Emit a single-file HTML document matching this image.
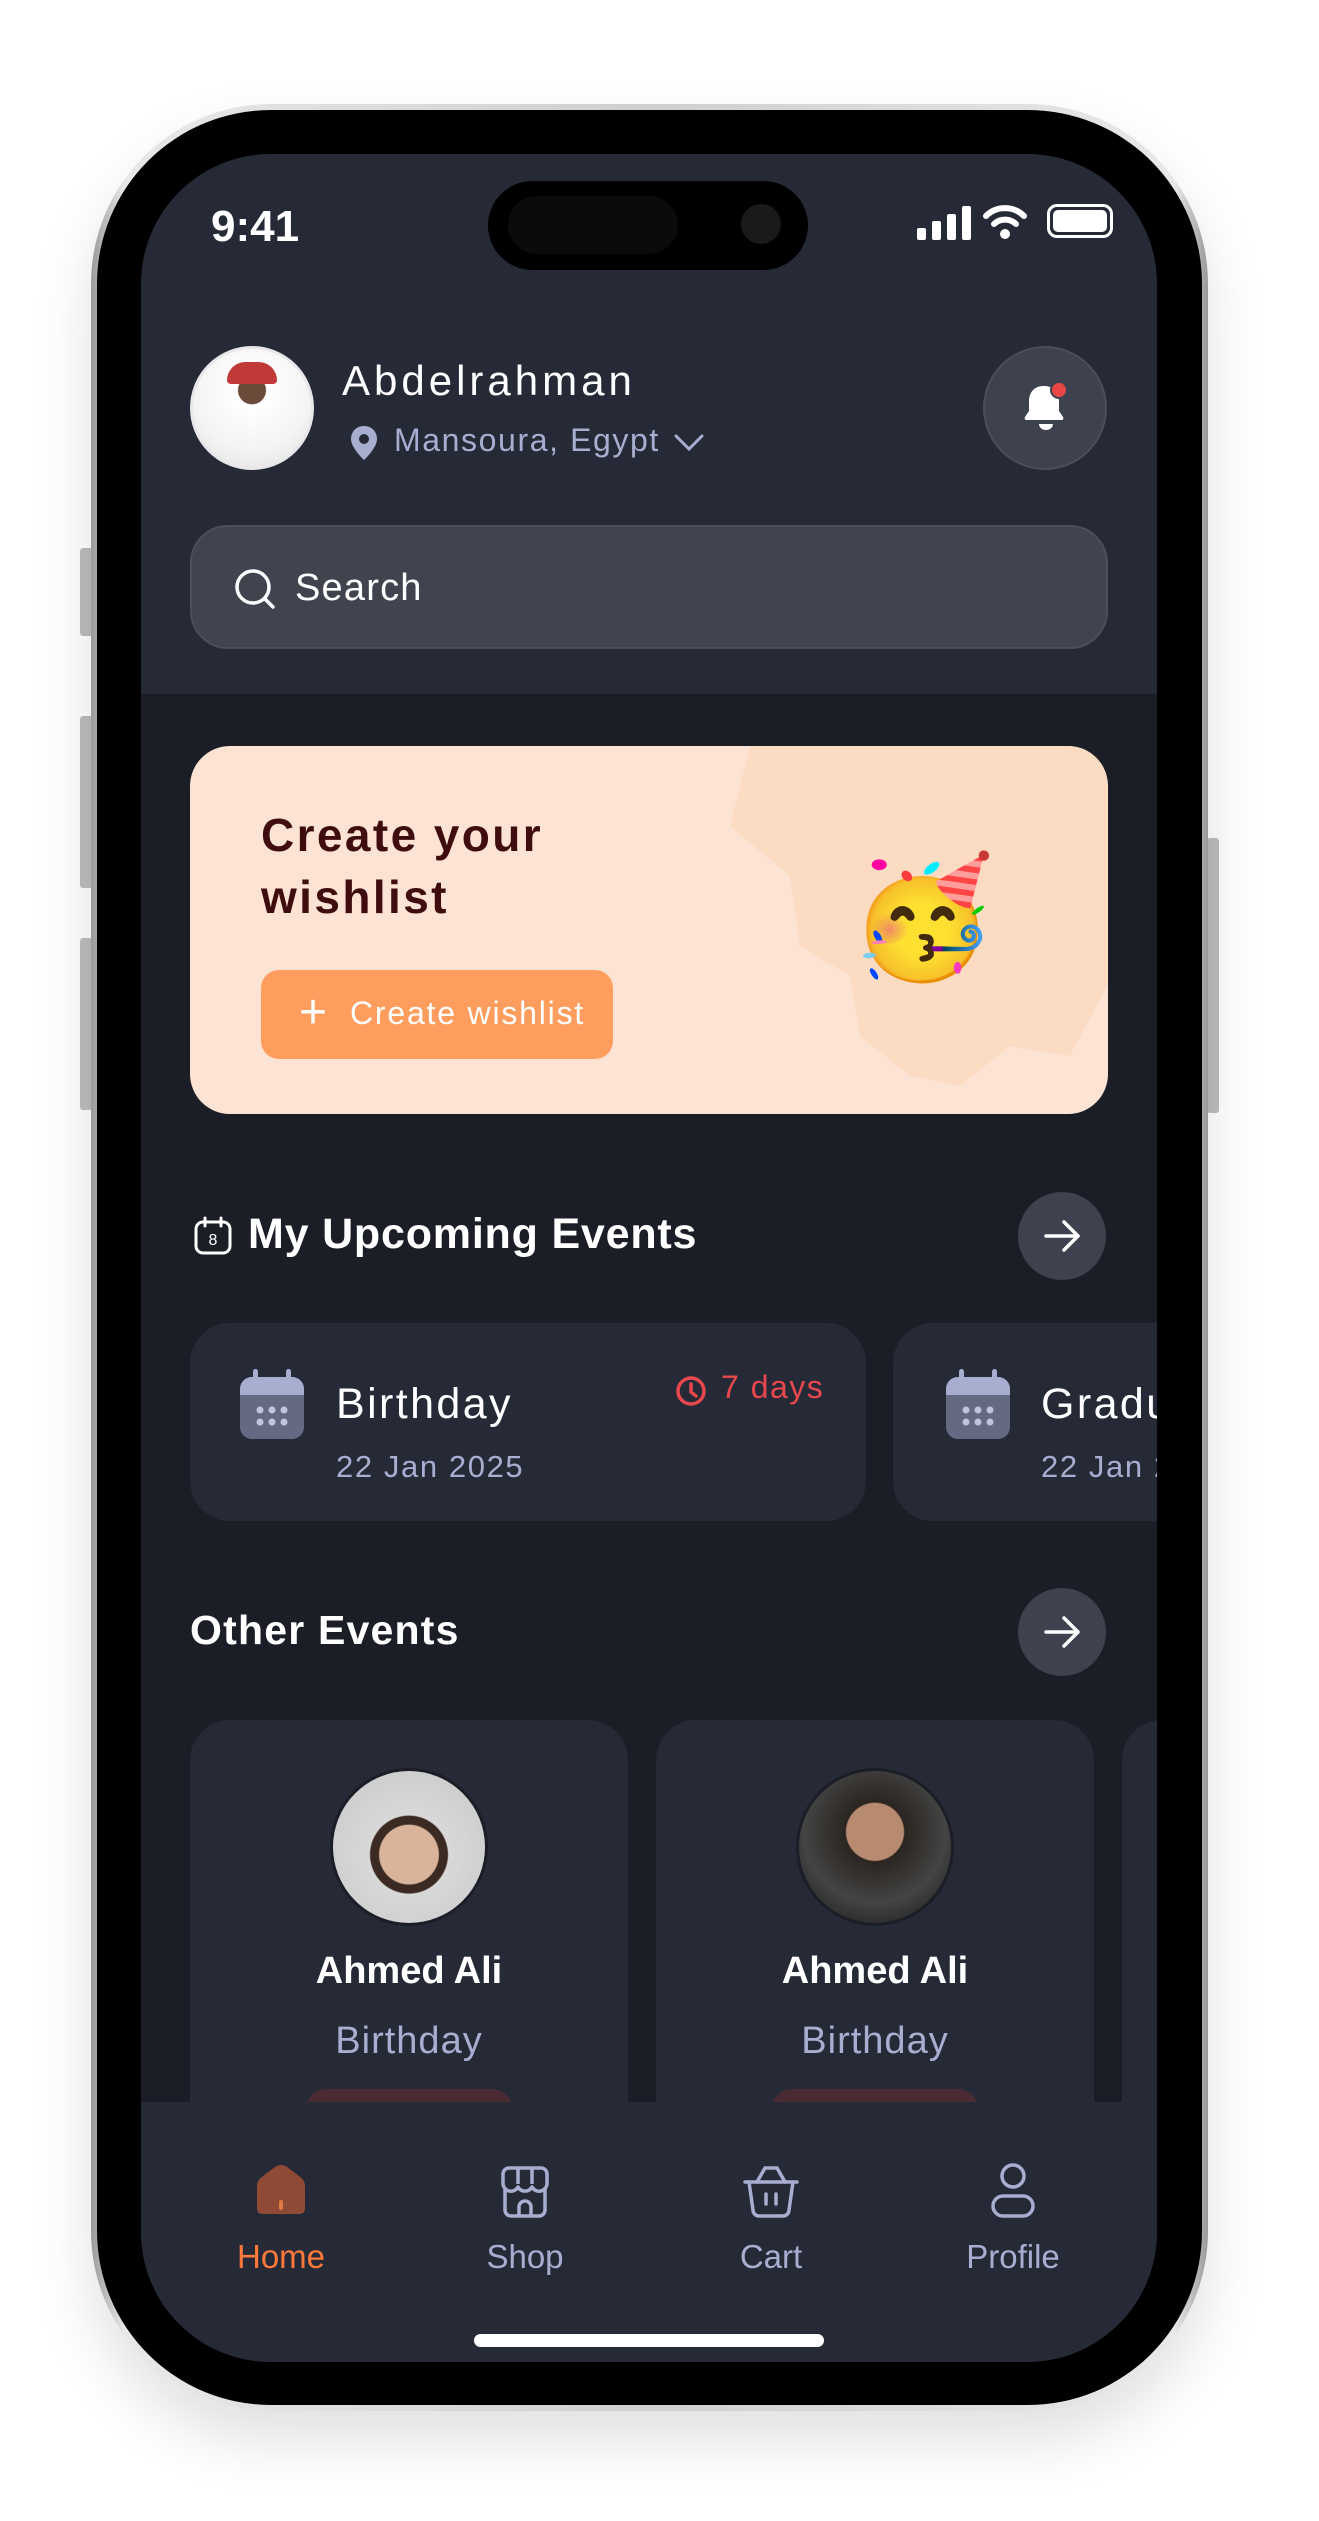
<!DOCTYPE html>
<html><head><meta charset="utf-8">
<style>
*{margin:0;padding:0;box-sizing:border-box}
body{width:1319px;height:2521px;background:#fff;position:relative;overflow:hidden;font-family:"Liberation Sans",sans-serif}
.abs{position:absolute}
.frame{left:91px;top:104px;width:1117px;height:2307px;border-radius:180px;background:linear-gradient(90deg,#9a9a9a,#e8e8e8 3%,#cfcfcf 50%,#e8e8e8 97%,#9a9a9a);box-shadow:0 30px 60px rgba(0,0,0,.12)}
.bezel{left:97px;top:110px;width:1105px;height:2295px;border-radius:174px;background:#000}
.screen{left:141px;top:154px;width:1016px;height:2208px;border-radius:130px;background:#1b1e26;overflow:hidden}
.btn{background:#bdbdbd;border-radius:3px}
.t{position:absolute;white-space:nowrap}
</style></head><body>
<div class="abs btn" style="left:80px;top:548px;width:12px;height:88px"></div>
<div class="abs btn" style="left:80px;top:716px;width:12px;height:172px"></div>
<div class="abs btn" style="left:80px;top:938px;width:12px;height:172px"></div>
<div class="abs btn" style="left:1207px;top:838px;width:12px;height:275px"></div>
<div class="abs frame"></div>
<div class="abs bezel"></div>
<div class="abs screen">
  <div class="abs" style="left:0;top:0;width:1016px;height:540px;background:#262a36"></div>
  <div class="t" style="left:70px;top:48px;color:#fff;font-size:44px;font-weight:bold">9:41</div>
  <div class="abs" style="left:347px;top:27px;width:320px;height:89px;border-radius:45px;background:#000"></div>
  <div class="abs" style="left:367px;top:42px;width:170px;height:58px;border-radius:29px;background:#0b0b0b"></div>
  <div class="abs" style="left:600px;top:50px;width:40px;height:40px;border-radius:20px;background:#1a1a1a"></div>
  <svg class="abs" style="left:776px;top:52px" width="56" height="34"><rect x="0" y="22" width="9" height="12" rx="2" fill="#fff"/><rect x="15" y="15" width="9" height="19" rx="2" fill="#fff"/><rect x="30" y="8" width="9" height="26" rx="2" fill="#fff"/><rect x="45" y="0" width="9" height="34" rx="2" fill="#fff"/></svg>
  <svg class="abs" style="left:842px;top:50px" width="44" height="36" viewBox="0 0 44 36"><path d="M3 12 A27 27 0 0 1 41 12" stroke="#fff" stroke-width="6" fill="none" stroke-linecap="round"/><path d="M11 20 A16 16 0 0 1 33 20" stroke="#fff" stroke-width="6" fill="none" stroke-linecap="round"/><circle cx="22" cy="30" r="5" fill="#fff"/></svg>
  <div class="abs" style="left:906px;top:50px;width:66px;height:34px;border:3px solid #fff;border-radius:10px;padding:3px"><div style="width:100%;height:100%;background:#fff;border-radius:5px"></div></div>
  <div class="abs" style="left:49px;top:192px;width:124px;height:124px;border-radius:62px;background:radial-gradient(circle at 50% 35%,#6b4a3a 0 14%,#fff 15%,#f4f4f4 60%,#e0e0e0);border:3px solid #e8e8e8"></div>
  <div class="abs" style="left:86px;top:208px;width:50px;height:22px;background:#c03a3a;border-radius:20px 20px 4px 4px"></div>
  <div class="t" style="left:201px;top:203px;color:#fff;font-size:42px;letter-spacing:4px">Abdelrahman</div>
  <svg class="abs" style="left:208px;top:270px" width="30" height="38" viewBox="0 0 30 38"><path d="M15 2C7 2 2 8 2 15c0 9 13 21 13 21s13-12 13-21C28 8 23 2 15 2z" fill="#a8aed0"/><circle cx="15" cy="15" r="5" fill="#262a36"/></svg>
  <div class="t" style="left:253px;top:268px;color:#a8aed0;font-size:32px;letter-spacing:1.6px">Mansoura, Egypt</div>
  <svg class="abs" style="left:532px;top:279px" width="32" height="20"><path d="M3 3l13 13 13-13" stroke="#a8aed0" stroke-width="3" fill="none" stroke-linecap="round"/></svg>
  <div class="abs" style="left:842px;top:192px;width:124px;height:124px;border-radius:62px;background:#3e424e;border:2px solid #4a4e5a"></div>
  <svg class="abs" style="left:880px;top:226px" width="50" height="56" viewBox="0 0 50 56"><path d="M22 6c-9 0-14 7-14 15v10l-4 6c-1 2 0 3 2 3h34c2 0 3-1 2-3l-4-6V21c0-8-6-15-14-15z" fill="#fff"/><path d="M18 44a7 6 0 0 0 14 0z" fill="#fff"/><circle cx="38" cy="10" r="8" fill="#e84545" stroke="#3e424e" stroke-width="2"/></svg>
  <div class="abs" style="left:49px;top:371px;width:918px;height:124px;border-radius:38px;background:#41444f;border:2px solid #4c4f5a"></div>
  <svg class="abs" style="left:92px;top:413px" width="44" height="44" viewBox="0 0 44 44"><circle cx="20" cy="20" r="16" stroke="#fff" stroke-width="3.5" fill="none"/><path d="M32 32l8 8" stroke="#fff" stroke-width="3.5" stroke-linecap="round"/></svg>
  <div class="t" style="left:154px;top:413px;color:#fff;font-size:38px;letter-spacing:1.2px">Search</div>
  <div class="abs" style="left:49px;top:592px;width:918px;height:368px;border-radius:40px;background:#fde3d3;overflow:hidden">
    <svg class="abs" style="left:520px;top:0" width="397" height="367" viewBox="0 0 397 367"><path d="M40 0H397V240L360 310 300 300 250 340 200 330 150 290 140 230 90 200 80 130 20 80z" fill="#fcdbc3"/></svg>
  </div>
  <div class="t" style="left:120px;top:650px;color:#3f0d0d;font-size:46px;font-weight:bold;line-height:62px;letter-spacing:2.4px">Create your<br>wishlist</div>
  <div class="abs" style="left:120px;top:816px;width:352px;height:89px;border-radius:18px;background:#ff9d5f"></div>
  <div class="t" style="left:158px;top:831px;color:#fff;font-size:48px;line-height:56px">+</div>
  <div class="t" style="left:209px;top:841px;color:#fff;font-size:32px;letter-spacing:1.8px">Create wishlist</div>
  <div class="t" style="left:708px;top:694px;font-size:118px;line-height:140px;font-family:'Noto Color Emoji','DejaVu Sans',sans-serif">🥳</div>
  <svg class="abs" style="left:52px;top:1062px" width="40" height="40" viewBox="0 0 40 40"><rect x="3" y="6" width="34" height="31" rx="7" stroke="#fff" stroke-width="3" fill="none"/><path d="M12 2v8M28 2v8" stroke="#fff" stroke-width="3" stroke-linecap="round"/><text x="20" y="29" fill="#fff" font-size="16" text-anchor="middle" font-family="Liberation Sans">8</text></svg>
  <div class="t" style="left:107px;top:1056px;color:#fff;font-size:43px;font-weight:bold;letter-spacing:0.8px">My Upcoming Events</div>
  <div class="abs" style="left:877px;top:1038px;width:88px;height:88px;border-radius:44px;background:#3e424e"></div>
  <svg class="abs" style="left:901px;top:1062px" width="40" height="40"><path d="M4 20h32M22 6l14 14-14 14" stroke="#fff" stroke-width="3.5" fill="none" stroke-linecap="round" stroke-linejoin="round"/></svg>
  <div class="abs" style="left:49px;top:1169px;width:676px;height:198px;border-radius:40px;background:#262a37"></div>
  <div class="abs" style="left:752px;top:1169px;width:400px;height:198px;border-radius:40px;background:#262a37"></div>
  <svg class="abs" style="left:99px;top:1215px" width="64" height="72" viewBox="0 0 64 72"><rect x="0" y="8" width="64" height="62" rx="12" fill="#646a82"/><path d="M0 20a12 12 0 0 1 12-12h40a12 12 0 0 1 12 12v6H0z" fill="#a8aed0"/><rect x="13" y="0" width="5" height="14" rx="2.5" fill="#a8aed0"/><rect x="46" y="0" width="5" height="14" rx="2.5" fill="#a8aed0"/><g fill="#c0c5e0"><circle cx="20" cy="41" r="3.5"/><circle cx="32" cy="41" r="3.5"/><circle cx="44" cy="41" r="3.5"/><circle cx="20" cy="53" r="3.5"/><circle cx="32" cy="53" r="3.5"/><circle cx="44" cy="53" r="3.5"/></g></svg>
  <svg class="abs" style="left:805px;top:1215px" width="64" height="72" viewBox="0 0 64 72"><rect x="0" y="8" width="64" height="62" rx="12" fill="#646a82"/><path d="M0 20a12 12 0 0 1 12-12h40a12 12 0 0 1 12 12v6H0z" fill="#a8aed0"/><rect x="13" y="0" width="5" height="14" rx="2.5" fill="#a8aed0"/><rect x="46" y="0" width="5" height="14" rx="2.5" fill="#a8aed0"/><g fill="#c0c5e0"><circle cx="20" cy="41" r="3.5"/><circle cx="32" cy="41" r="3.5"/><circle cx="44" cy="41" r="3.5"/><circle cx="20" cy="53" r="3.5"/><circle cx="32" cy="53" r="3.5"/><circle cx="44" cy="53" r="3.5"/></g></svg>
  <div class="t" style="left:195px;top:1226px;color:#fff;font-size:43px;letter-spacing:2.4px">Birthday</div>
  <div class="t" style="left:195px;top:1295px;color:#a8aed0;font-size:31px;letter-spacing:1.6px">22 Jan 2025</div>
  <svg class="abs" style="left:533px;top:1220px" width="34" height="34"><circle cx="17" cy="17" r="13" stroke="#e8484d" stroke-width="3.5" fill="none"/><path d="M17 10v8l5 4" stroke="#e8484d" stroke-width="3.5" fill="none" stroke-linecap="round"/></svg>
  <div class="t" style="left:580px;top:1215px;color:#e8484d;font-size:32px;letter-spacing:1.5px">7 days</div>
  <div class="t" style="left:900px;top:1226px;color:#fff;font-size:43px;letter-spacing:2.4px">Graduation</div>
  <div class="t" style="left:900px;top:1295px;color:#a8aed0;font-size:31px;letter-spacing:1.6px">22 Jan 2025</div>
  <div class="t" style="left:49px;top:1453px;color:#fff;font-size:41px;font-weight:bold;letter-spacing:1.2px">Other Events</div>
  <div class="abs" style="left:877px;top:1434px;width:88px;height:88px;border-radius:44px;background:#3e424e"></div>
  <svg class="abs" style="left:901px;top:1458px" width="40" height="40"><path d="M4 20h32M22 6l14 14-14 14" stroke="#fff" stroke-width="3.5" fill="none" stroke-linecap="round" stroke-linejoin="round"/></svg>
  <div class="abs" style="left:49px;top:1566px;width:438px;height:500px;border-radius:40px;background:#262a37"></div>
  <div class="abs" style="left:515px;top:1566px;width:438px;height:500px;border-radius:40px;background:#262a37"></div>
  <div class="abs" style="left:981px;top:1566px;width:100px;height:500px;border-radius:40px;background:#262a37"></div>
  <div class="abs" style="left:189px;top:1614px;width:158px;height:158px;border-radius:79px;background:radial-gradient(circle at 50% 55%,#d9b49a 0 26%,#3a2a22 27%,#3a2a22 34%,#d8d8d8 35%,#c8c8c8);border:3px solid #1b1e26"></div>
  <div class="abs" style="left:655px;top:1614px;width:158px;height:158px;border-radius:79px;background:radial-gradient(circle at 50% 40%,#b88a70 0 24%,#2a2520 25%,#444 60%,#111);border:3px solid #1b1e26"></div>
  <div class="t" style="left:49px;width:438px;text-align:center;top:1796px;color:#fff;font-size:38px;font-weight:bold">Ahmed Ali</div>
  <div class="t" style="left:515px;width:438px;text-align:center;top:1796px;color:#fff;font-size:38px;font-weight:bold">Ahmed Ali</div>
  <div class="t" style="left:49px;width:438px;text-align:center;top:1866px;color:#a8aed0;font-size:38px;letter-spacing:1px">Birthday</div>
  <div class="t" style="left:515px;width:438px;text-align:center;top:1866px;color:#a8aed0;font-size:38px;letter-spacing:1px">Birthday</div>
  <div class="abs" style="left:165px;top:1935px;width:206px;height:40px;border-radius:20px;background:#4a2a33"></div>
  <div class="abs" style="left:631px;top:1935px;width:206px;height:40px;border-radius:20px;background:#4a2a33"></div>
  <div class="abs" style="left:0;top:1948px;width:1016px;height:266px;background:#262a37"></div>
  <svg class="abs" style="left:112px;top:2010px" width="56" height="52" viewBox="0 0 56 52"><path d="M4 22 Q4 16 10 12 L22 3 Q28 -1 34 3 L46 12 Q52 16 52 22 V44 Q52 50 46 50 H10 Q4 50 4 44z" fill="#8e4a34"/><rect x="26" y="36" width="4" height="10" rx="2" fill="#e07a40"/></svg>
  <div class="t" style="left:40px;width:200px;text-align:center;top:2084px;color:#ff7a3a;font-size:33px">Home</div>
  <svg class="abs" style="left:356px;top:2010px" width="56" height="56" viewBox="0 0 56 56" fill="none" stroke="#a8aed0" stroke-width="3.5" stroke-linejoin="round"><path d="M6 10a6 6 0 0 1 6-6h32a6 6 0 0 1 6 6v10a8 8 0 0 1-15 3 8 8 0 0 1-14 0 8 8 0 0 1-15-3z"/><path d="M8 24v22a6 6 0 0 0 6 6h28a6 6 0 0 0 6-6V24"/><path d="M21 4v16M35 4v16"/><path d="M22 52v-9a6 6 0 0 1 12 0v9"/></svg>
  <div class="t" style="left:284px;width:200px;text-align:center;top:2084px;color:#a8aed0;font-size:33px">Shop</div>
  <svg class="abs" style="left:600px;top:2008px" width="60" height="58" viewBox="0 0 60 58" fill="none" stroke="#a8aed0" stroke-width="3.5" stroke-linecap="round" stroke-linejoin="round"><path d="M4 20h52"/><path d="M8 20l4 28a6 6 0 0 0 6 6h24a6 6 0 0 0 6-6l4-28"/><path d="M16 20L24 6M44 20L36 6M24 6h12"/><path d="M25 32v10M35 32v10"/></svg>
  <div class="t" style="left:530px;width:200px;text-align:center;top:2084px;color:#a8aed0;font-size:33px">Cart</div>
  <svg class="abs" style="left:848px;top:2008px" width="48" height="58" viewBox="0 0 48 58" fill="none" stroke="#a8aed0" stroke-width="3.5"><circle cx="24" cy="14" r="11"/><rect x="4" y="34" width="40" height="20" rx="10"/></svg>
  <div class="t" style="left:772px;width:200px;text-align:center;top:2084px;color:#a8aed0;font-size:33px">Profile</div>
  <div class="abs" style="left:333px;top:2180px;width:350px;height:13px;border-radius:7px;background:#fff"></div>
</div>
</body></html>
